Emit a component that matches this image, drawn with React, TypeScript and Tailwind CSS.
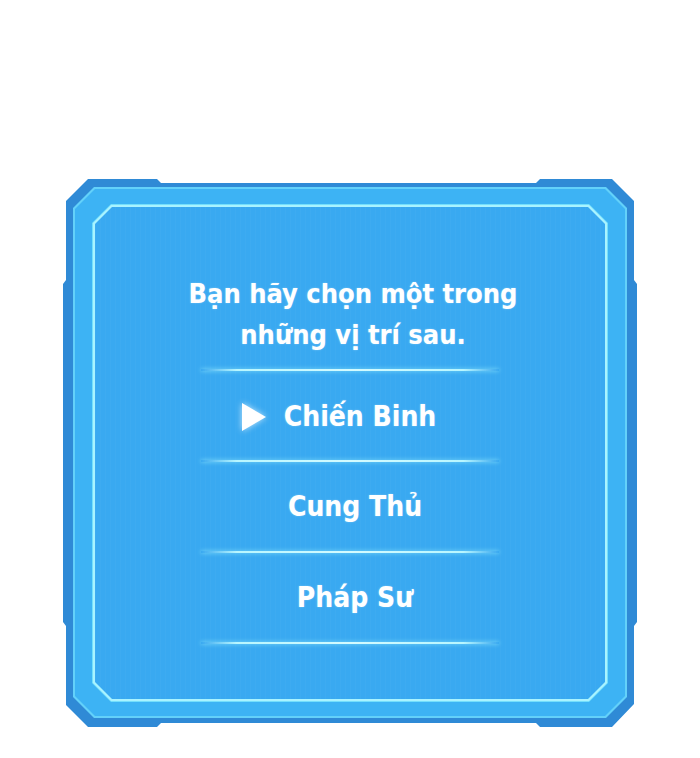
import React from "react";

const Separator = () => (
  <div className="h-[2px] w-[298px] shrink-0 bg-[linear-gradient(90deg,rgba(190,248,255,0)_0%,#b8f6ff_12%,#d4fbff_50%,#b8f6ff_88%,rgba(190,248,255,0)_100%)] shadow-[0_0_4px_rgba(150,240,255,0.9)]" />
);

const Option = ({ label, active }: { label: string; active?: boolean }) => (
  <div
    className={
      active
        ? "flex h-[89px] w-full items-center justify-center pt-[2px] pl-[20px]"
        : "flex h-[89px] w-full items-center justify-center pl-[10px]"
    }
  >
    <span className="relative text-[28px] leading-[32px] font-bold text-white [text-shadow:0_0_2px_rgba(255,255,255,0.35)]">
      {active && (
        <svg
          viewBox="0 0 26 30"
          className="absolute right-full top-1/2 mr-[17px] h-[30px] w-[26px] -translate-y-1/2 drop-shadow-[0_0_3px_rgba(255,255,255,0.7)]"
        >
          <path d="M1 1 L25 15 L1 29 Z" fill="#ffffff" />
        </svg>
      )}
      {label}
    </span>
  </div>
);

export default function App() {
  return (
    <div className="flex h-[758px] w-[700px] justify-center bg-white pt-[179px] font-['DejaVu_Sans_Condensed','DejaVu_Sans',sans-serif] [font-stretch:condensed]">
      {/* outer dark frame with raised corner tabs */}
      <div className="h-[548px] w-[574px] bg-[#2f8ad6] px-[10px] pt-[8px] pb-[9px] [clip-path:polygon(25px_0,94px_0,98px_4px,473px_4px,477px_0,549px_0,571px_22px,571px_101px,574px_105px,574px_443px,571px_447px,571px_525px,549px_548px,477px_548px,473px_544px,98px_544px,94px_548px,25px_548px,3px_526px,3px_447px,0_443px,0_105px,3px_101px,3px_22px)]">
        {/* bright rim */}
        <div className="h-full w-full bg-[#63d1fa] p-[2px] [clip-path:polygon(21px_0,calc(100%_-_21px)_0,100%_21px,100%_calc(100%_-_21px),calc(100%_-_21px)_100%,21px_100%,0_calc(100%_-_21px),0_21px)]">
          <div className="h-full w-full bg-[#3db3f4] px-[17px] pt-[15px] pb-[14px] [clip-path:polygon(20px_0,calc(100%_-_20px)_0,100%_20px,100%_calc(100%_-_20px),calc(100%_-_20px)_100%,20px_100%,0_calc(100%_-_20px),0_20px)]">
            {/* inner glowing line */}
            <div className="h-full w-full bg-[#74dffc] p-[1px] [clip-path:polygon(19px_0,calc(100%_-_19px)_0,100%_19px,100%_calc(100%_-_19px),calc(100%_-_19px)_100%,19px_100%,0_calc(100%_-_19px),0_19px)]">
              <div className="h-full w-full bg-[#a9f3ff] p-[2px] [clip-path:polygon(18px_0,calc(100%_-_18px)_0,100%_18px,100%_calc(100%_-_18px),calc(100%_-_18px)_100%,18px_100%,0_calc(100%_-_18px),0_18px)]">
                <div className="flex h-full w-full flex-col items-center bg-[#39a9f1] bg-[repeating-linear-gradient(90deg,rgba(255,255,255,0.025)_0px,rgba(255,255,255,0.025)_1px,rgba(0,0,0,0)_1px,rgba(0,0,0,0)_5px)] pt-[66px] [clip-path:polygon(17px_0,calc(100%_-_17px)_0,100%_17px,100%_calc(100%_-_17px),calc(100%_-_17px)_100%,17px_100%,0_calc(100%_-_17px),0_17px)]">
                  <p className="pl-[6px] text-center text-[27px] leading-[41px] font-bold text-white [text-shadow:0_0_2px_rgba(255,255,255,0.35)]">
                    Bạn hãy chọn một trong
                    <br />
                    những vị trí sau.
                  </p>
                  <div className="mt-[14px] flex w-full flex-col items-center">
                    <Separator />
                    <Option label="Chiến Binh" active />
                    <Separator />
                    <Option label="Cung Thủ" />
                    <Separator />
                    <Option label="Pháp Sư" />
                    <Separator />
                  </div>
                </div>
              </div>
            </div>
          </div>
        </div>
      </div>
    </div>
  );
}
